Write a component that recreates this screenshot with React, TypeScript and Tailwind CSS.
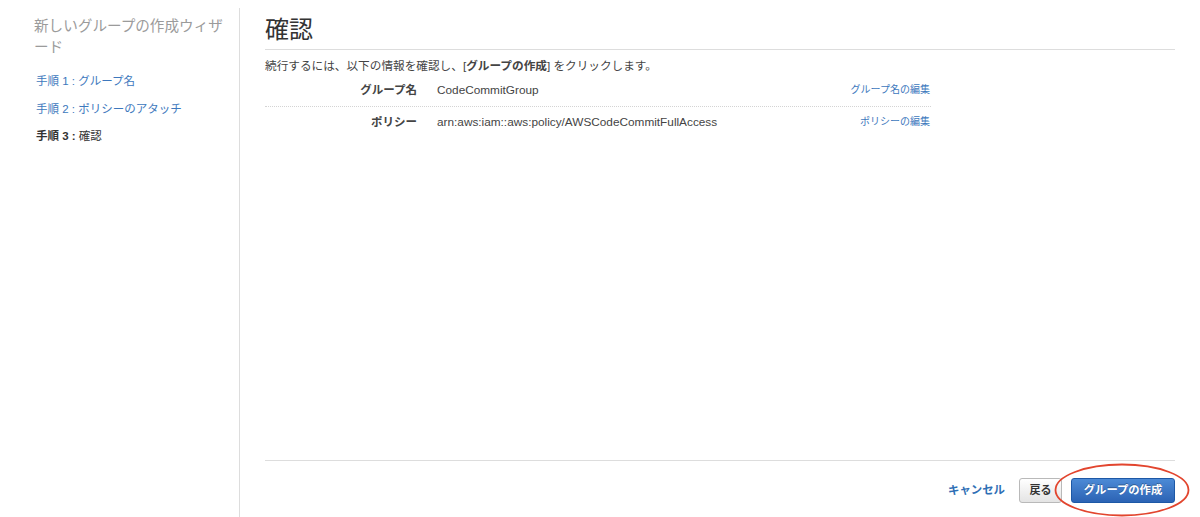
import React from "react";

const font = "font-['Liberation_Sans','Noto_Sans_CJK_JP',sans-serif]";

export default function App() {
  return (
    <div className={`relative flex h-[517px] w-[1200px] overflow-hidden bg-white ${font}`}>
      <aside className="mt-[8px] w-[240px] shrink-0 border-r border-[#dddddd] pl-[34px]">
        <div className="w-[200px] pt-[8px] text-[14.6px] leading-[21px] text-[#9b9b9b]">
          新しいグループの作成ウィザード
        </div>
        <ul className="mt-[15px] pl-[2px] text-[11.5px] leading-[16px]">
          <li className="h-[27.5px]">
            <a className="text-[#3d78bd]">手順 1 : グループ名</a>
          </li>
          <li className="h-[27.5px]">
            <a className="text-[#3d78bd]">手順 2 : ポリシーのアタッチ</a>
          </li>
          <li className="h-[27.5px] text-[#333333]">
            <span className="font-bold">手順 3 :</span> 確認
          </li>
        </ul>
      </aside>

      <main className="flex flex-1 flex-col pl-[25px] pr-[25px]">
        <h1 className="border-b border-[#dddddd] pb-[3px] pt-[14px] text-[24px] font-normal leading-[32px] text-[#333333]">
          確認
        </h1>
        <p className="mt-[8px] text-[11.65px] leading-[16px] text-[#444444]">
          続行するには、以下の情報を確認し、[<span className="font-bold">グループの作成</span>] をクリックします。
        </p>

        <div className="w-[666px] text-[#444444]">
          <div className="flex items-center pb-[8px] pt-[8px] leading-[16px]">
            <div className="w-[152px] text-right text-[11.5px] font-bold">グループ名</div>
            <div className="ml-[20px] flex-1 text-[11.8px]">CodeCommitGroup</div>
            <a className="pr-[1px] text-right text-[10px] text-[#3d78bd]">グループ名の編集</a>
          </div>
          <div className="flex items-center border-t border-dotted border-[#d4d4d4] pb-[8px] pt-[7px] leading-[16px]">
            <div className="w-[152px] text-right text-[11.5px] font-bold">ポリシー</div>
            <div className="ml-[20px] flex-1 text-[11.8px]">arn:aws:iam::aws:policy/AWSCodeCommitFullAccess</div>
            <a className="pr-[1px] text-right text-[10px] text-[#3d78bd]">ポリシーの編集</a>
          </div>
        </div>

        <div className="flex-1" />

        <footer className="flex h-[57px] items-start justify-end border-t border-[#dddddd] pt-[17px]">
          <a className="mr-[14px] flex h-[25px] items-center text-[11.4px] font-bold text-[#2f6fb5]">
            キャンセル
          </a>
          <button className="mr-[9px] flex h-[25px] w-[43px] items-center justify-center rounded-[3px] border border-[#b9b9b9] bg-gradient-to-b from-[#ffffff] to-[#e4e4e4] text-[11px] font-bold text-[#333333]">
            戻る
          </button>
          <button className="flex h-[25px] w-[104px] items-center justify-center rounded-[3px] border border-[#1d58a6] bg-gradient-to-b from-[#4c8ad6] to-[#2c63b4] text-[11.3px] font-bold text-white [text-shadow:0_-1px_0_rgba(0,0,0,0.3)]">
            グループの作成
          </button>
        </footer>
      </main>

      <svg
        className="pointer-events-none absolute left-[1054px] top-[463px]"
        width="136"
        height="54"
        viewBox="0 0 136 54"
      >
        <ellipse cx="68" cy="27" rx="66.5" ry="25.5" fill="none" stroke="#e2452e" strokeWidth="1.8" />
      </svg>
    </div>
  );
}
